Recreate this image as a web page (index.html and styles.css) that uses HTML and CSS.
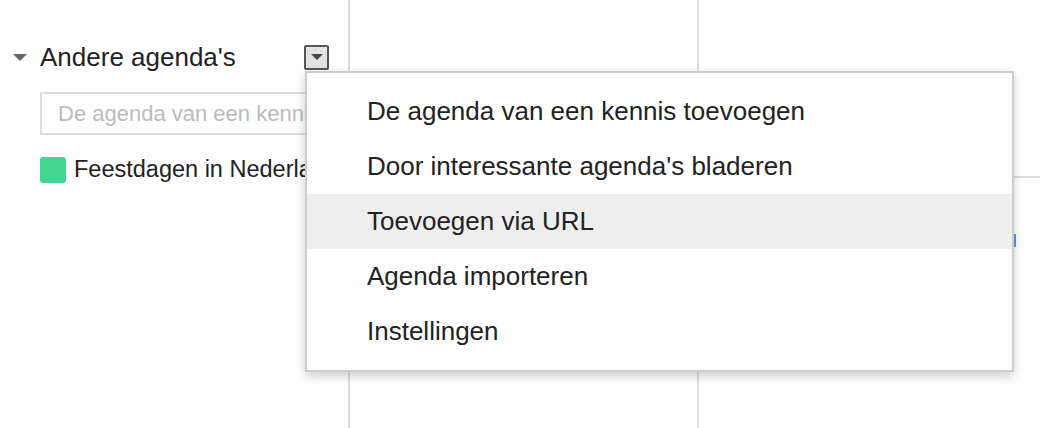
FILE: index.html
```html
<!DOCTYPE html>
<html lang="nl">
  <head>
    <meta charset="utf-8" />
    <title>Andere agenda's</title>
    <link rel="stylesheet" href="styles.css">
  </head>
<body>

<div class="app">
  <div class="sidebar">
    <div class="kop">
      <span class="pijl"></span>
      <span class="titel">Andere agenda's</span>
      <a href="#" class="knop"><span></span></a>
    </div>
    <input class="zoek" type="text" placeholder="De agenda van een kennis toevoegen" />
    <div class="agenda"><span class="kleur"></span>Feestdagen in Nederland</div>
  </div>
  <div class="kolom"></div>
  <div class="kolom laatste">
    <div class="cel"></div>
    <div class="event"></div>
  </div>
</div>

<ul class="menu">
  <li>De agenda van een kennis toevoegen</li>
  <li>Door interessante agenda's bladeren</li>
  <li class="actief">Toevoegen via URL</li>
  <li>Agenda importeren</li>
  <li>Instellingen</li>
</ul>

</body>
</html>
```

FILE: styles.css
```css
body {
    margin: 0;
    font-family: "Liberation Sans", Arial, sans-serif;
    color: #222;
    background: #fff;
}
.app {
    display: flex;
    height: 428px;
}
.sidebar {
    width: 348px;
    flex: none;
    padding: 44px 19px 0 13px;
    box-sizing: border-box;
    overflow: hidden;
}
.kop {
    display: flex;
    align-items: center;
    height: 26px;
}
.pijl {
    width: 0;
    height: 0;
    border-left: 7px solid transparent;
    border-right: 7px solid transparent;
    border-top: 7px solid #666;
    margin-right: 13px;
}
.titel {
    font-size: 26px;
    flex: 1;
}
.knop {
    width: 21px;
    height: 21px;
    border: 2px solid #555;
    border-radius: 2px;
    background: #e3e3e3;
    display: flex;
    align-items: center;
    justify-content: center;
}
.knop span {
    width: 0;
    height: 0;
    border-left: 6px solid transparent;
    border-right: 6px solid transparent;
    border-top: 6px solid #444;
}
.zoek {
    display: block;
    margin: 22px 0 0 27px;
    width: 289px;
    height: 43px;
    box-sizing: border-box;
    border: 2px solid #ddd;
    padding: 0 16px;
    font-family: inherit;
    font-size: 22px;
    outline: none;
}
.zoek::placeholder {
    color: #bbb;
}
.agenda {
    display: flex;
    align-items: center;
    margin: 21px 0 0 27px;
    font-size: 23.5px;
    white-space: nowrap;
}
.kleur {
    width: 26px;
    height: 26px;
    border-radius: 3px;
    background: #42d692;
    margin-right: 8px;
    flex: none;
}
.kolom {
    width: 349px;
    flex: none;
    border-left: 2px solid #ddd;
    box-sizing: border-box;
}
.laatste {
    flex: 1;
    width: auto;
}
.cel {
    height: 176px;
    border-bottom: 2px solid #ddd;
}
.event {
    margin: 56px 0 0 291px;
    width: 26px;
    height: 13px;
    background: #7986e0;
}
.menu {
    position: absolute;
    left: 305px;
    top: 71px;
    width: 705px;
    margin: 0;
    padding: 11px 0;
    list-style: none;
    background: #fff;
    border: 2px solid #ccc;
    box-shadow: 0 4px 10px rgba(0, 0, 0, 0.2);
}
.menu li {
    height: 55px;
    line-height: 55px;
    padding-left: 60px;
    font-size: 26px;
    color: #222;
}
.menu .actief {
    background: #eee;
}
```
